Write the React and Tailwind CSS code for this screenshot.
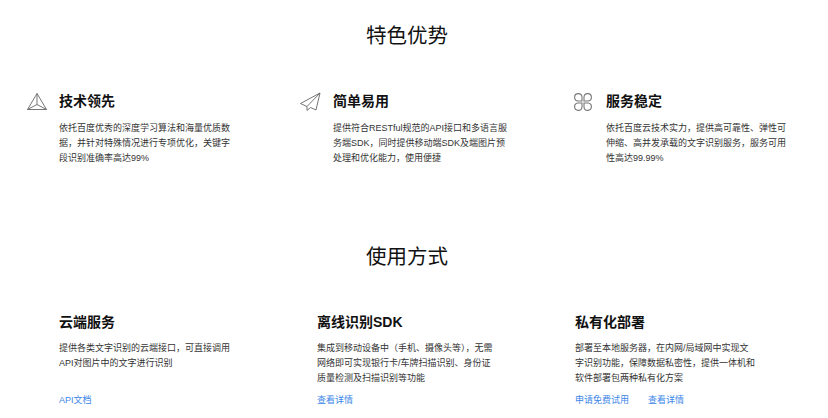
const FONT = "font-['Liberation_Sans','Noto_Sans_CJK_SC',sans-serif]";

const FEATURES = [
  {
    title: "技术领先",
    lines: ["依托百度优秀的深度学习算法和海量优质数", "据，并针对特殊情况进行专项优化，关键字", "段识别准确率高达99%"],
    icon: (
      <svg width="22" height="20" viewBox="0 0 22 20" fill="none" stroke="#666" strokeWidth="0.9">
        <path d="M11 1.5 20.5 17.5H1.5Z" strokeLinejoin="round" />
        <path d="M11 1.5 11 12.5M1.5 17.5 11 12.5 20.5 17.5" />
      </svg>
    ),
  },
  {
    title: "简单易用",
    lines: ["提供符合RESTful规范的API接口和多语言服", "务端SDK，同时提供移动端SDK及端图片预", "处理和优化能力，使用便捷"],
    icon: (
      <svg width="22" height="20" viewBox="0 0 22 20" fill="none" stroke="#666" strokeWidth="0.9" strokeLinejoin="round">
        <path d="M20 1 0.5 11.5 7 14.5" />
        <path d="M20 1 16 18 10.5 15.5 7 18.5 7 14.5 20 1Z" />
      </svg>
    ),
  },
  {
    title: "服务稳定",
    lines: ["依托百度云技术实力，提供高可靠性、弹性可", "伸缩、高并发承载的文字识别服务，服务可用", "性高达99.99%"],
    icon: (
      <svg width="20" height="20" viewBox="0 0 20 20" fill="none" stroke="#777" strokeWidth="1.1">
        <path d="M9 9H5A3.7 3.7 0 1 1 9 5Z" />
        <path d="M11 9H15A3.7 3.7 0 1 0 11 5Z" />
        <path d="M9 11H5A3.7 3.7 0 1 0 9 15Z" />
        <path d="M11 11H15A3.7 3.7 0 1 1 11 15Z" />
      </svg>
    ),
  },
];

const USAGES = [
  {
    title: "云端服务",
    lines: ["提供各类文字识别的云端接口，可直接调用", "API对图片中的文字进行识别"],
    links: ["API文档"],
  },
  {
    title: "离线识别SDK",
    lines: ["集成到移动设备中（手机、摄像头等），无需", "网络即可实现银行卡/车牌扫描识别、身份证", "质量检测及扫描识别等功能"],
    links: ["查看详情"],
  },
  {
    title: "私有化部署",
    lines: ["部署至本地服务器，在内网/局域网中实现文", "字识别功能，保障数据私密性，提供一体机和", "软件部署包两种私有化方案"],
    links: ["申请免费试用", "查看详情"],
  },
];

function Body({ lines, className }) {
  return (
    <div className={`text-[9px] leading-[15.2px] text-[#333] ${className}`}>
      {lines.map((line) => (
        <div key={line} className="whitespace-nowrap">{line}</div>
      ))}
    </div>
  );
}

export default function App() {
  return (
    <div className={`h-[418px] w-[828px] overflow-hidden bg-white text-black ${FONT}`}>
      {/* 特色优势 */}
      <h2 className="w-[814px] pt-[22px] text-center text-[20.5px] font-normal leading-[28px] text-[#111]">特色优势</h2>
      <div className="mt-[41px] grid grid-cols-[274px_273px_1fr] pl-[26px]">
        {FEATURES.map((item) => (
          <div key={item.title} className="flex">
            <div className="mt-[1px] w-[33px] shrink-0">{item.icon}</div>
            <div>
              <h3 className="text-[14px] font-bold leading-[20px] text-[#111]">{item.title}</h3>
              <Body lines={item.lines} className="mt-[10px]" />
            </div>
          </div>
        ))}
      </div>

      {/* 使用方式 */}
      <h2 className="mt-[76px] w-[814px] text-center text-[20.5px] font-normal leading-[28px] text-[#111]">使用方式</h2>
      <div className="mt-[41px] grid grid-cols-[258px_258px_1fr] pl-[59px]">
        {USAGES.map((item) => (
          <div key={item.title} className="flex flex-col">
            <h3 className="text-[14px] font-bold leading-[20px] text-[#111]">{item.title}</h3>
            <div className="h-[60px]">
              <Body lines={item.lines} className="mt-[9px]" />
            </div>
            <div className="mt-[1px] flex gap-[19px] text-[9px] leading-[14px] text-[#3b86e8]">
              {item.links.map((link) => (
                <a key={link} href="#">{link}</a>
              ))}
            </div>
          </div>
        ))}
      </div>
    </div>
  );
}
